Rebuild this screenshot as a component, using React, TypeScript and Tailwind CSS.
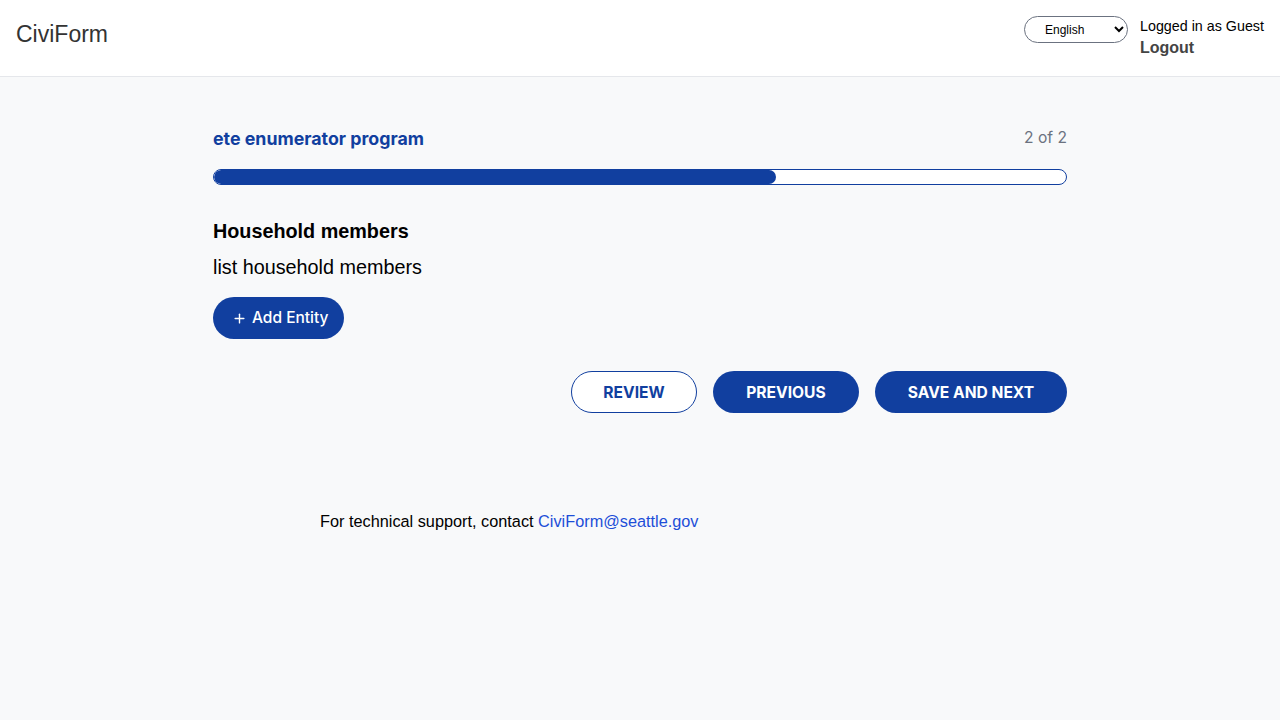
import { Plus } from 'lucide-react'

const inter = { fontFamily: 'Inter, "Liberation Sans", sans-serif' }

export default function App() {
  return (
    <div className="min-h-screen bg-[#f8f9fa] font-['Liberation_Sans',Arial,sans-serif] text-black">
      <header className="h-[77px] bg-white border-b border-[#e5e7eb] flex items-start justify-between">
        <div className="pl-4 pt-[17px] text-[23px] text-[#333333]">CiviForm</div>
        <div className="flex items-start pr-4 pt-4">
          <select
            defaultValue="en"
            className="w-[104px] h-[27px] rounded-full border border-[#6b7280] bg-white px-4 text-[12px] text-black"
          >
            <option value="en">English</option>
          </select>
          <div className="ml-3">
            <div className="text-[14.3px] leading-5">Logged in as Guest</div>
            <div className="text-[16px] font-bold text-[#444444] leading-5 mt-[2px]">Logout</div>
          </div>
        </div>
      </header>

      <main className="w-[854px] mx-auto pt-[50px]">
        <div className="flex items-center justify-between h-6" style={inter}>
          <h1 className="text-[17.8px] font-bold text-[#113f9f]">ete enumerator program</h1>
          <span className="text-[15.6px] text-[#6b7280] -mt-[2px]">2 of 2</span>
        </div>
        <div className="mt-[18px] h-4 rounded-full border border-[#113f9f] bg-white overflow-hidden">
          <div className="h-full w-[66%] rounded-full bg-[#113f9f]" />
        </div>

        <h2 className="mt-[34px] text-[19.8px] font-bold leading-6">Household members</h2>
        <p className="mt-[12px] text-[19.8px] leading-6">list household members</p>

        <button
          className="mt-[18px] h-[42px] pl-[19px] pr-[15px] rounded-full bg-[#113f9f] text-white text-[15.5px] font-medium flex items-center gap-[5px]"
          style={inter}
        >
          <Plus size={15} strokeWidth={2.25} />
          Add Entity
        </button>

        <div className="mt-8 flex justify-end gap-4" style={inter}>
          <button className="h-[42px] w-[126px] rounded-full border border-[#113f9f] bg-white text-[#113f9f] text-[15.6px] font-bold pt-[1px]">
            REVIEW
          </button>
          <button className="h-[42px] w-[146px] rounded-full bg-[#113f9f] text-white text-[15.6px] font-bold pt-[1px]">
            PREVIOUS
          </button>
          <button className="h-[42px] w-[192px] rounded-full bg-[#113f9f] text-white text-[15.6px] font-bold pt-[1px]">
            SAVE AND NEXT
          </button>
        </div>
      </main>

      <footer className="pl-[320px] mt-[96px] text-[16.3px]">
        For technical support, contact{' '}
        <a href="#" className="text-[#1d4ed8]">CiviForm@seattle.gov</a>
      </footer>
    </div>
  )
}
